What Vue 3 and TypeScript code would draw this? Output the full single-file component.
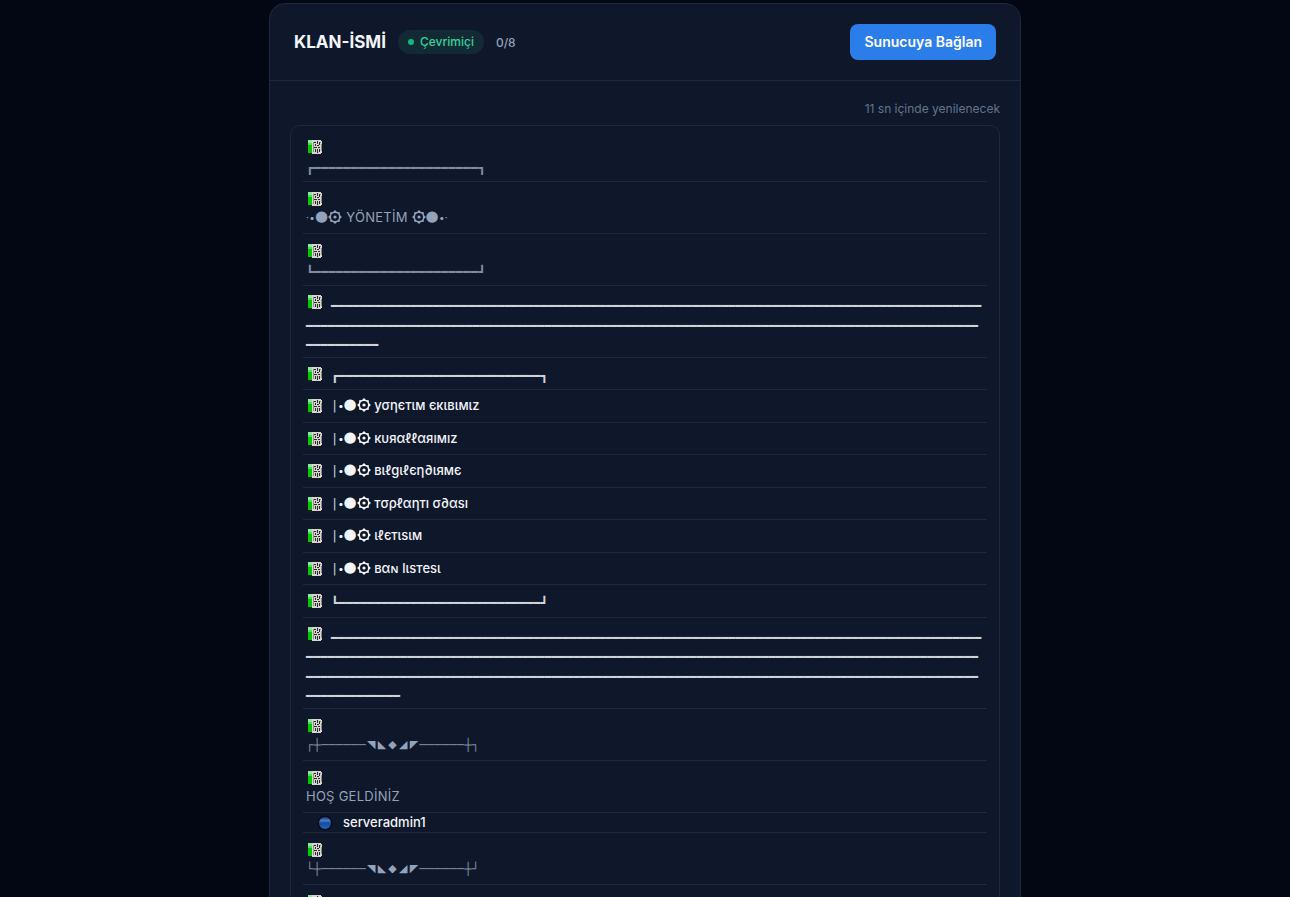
<script setup lang="ts">
type Kind = 'spacer' | 'channel' | 'user'
type PartType = 'text' | 'line' | 'frame' | 'rule' | 'disc' | 'star' | 'shape' | 'dots'

interface Part {
  type: PartType
  text: string
}

interface Row {
  kind: Kind
  parts: Part[]
}

const part = (type: PartType, value = ''): Part => ({ type, text: value })
const text = (value: string): Part => part('text', value)
const line = (value: string): Part => part('line', value)
const frame = (left: string, count: number, right: string): Part =>
  part('frame', left + '━'.repeat(count) + right)
const shapes = (value: string): Part[] => [...value].map((c) => part('shape', c))

const channel = (name: string): Row => ({
  kind: 'channel',
  parts: [line('|'), part('dots', '•'), part('disc', '●'), part('star'), text(' ' + name)],
})
const rule = (count: number): Row => ({ kind: 'channel', parts: [part('rule', '━'.repeat(count))] })
const dashes = '─'.repeat(6)

const rows: Row[] = [
  { kind: 'spacer', parts: [frame('┏', 22, '┓')] },
  {
    kind: 'spacer',
    parts: [
      part('dots', '·•'),
      part('disc', '●'),
      part('star'),
      text(' YÖNETİM '),
      part('star'),
      part('disc', '●'),
      part('dots', '•·'),
    ],
  },
  { kind: 'spacer', parts: [frame('┗', 22, '┛')] },
  rule(193),
  { kind: 'channel', parts: [frame('┏', 28, '┓')] },
  channel('yσηєтιм єкιвιмιz'),
  channel('кυяαℓℓαяıмız'),
  channel('вιℓgιℓєη∂ιямє'),
  channel('тσρℓαηтı σ∂αsı'),
  channel('ιℓєтιsιм'),
  channel('вαɴ lιsтesι'),
  { kind: 'channel', parts: [frame('┗', 28, '┛')] },
  rule(289),
  { kind: 'spacer', parts: [line('┌┼' + dashes), ...shapes('◥◣◆◢◤'), line(dashes + '┼┐')] },
  { kind: 'spacer', parts: [text('HOŞ GELDİNİZ')] },
  { kind: 'user', parts: [text('serveradmin1')] },
  { kind: 'spacer', parts: [line('└┼' + dashes), ...shapes('◥◣◆◢◤'), line(dashes + '┼┘')] },
  { kind: 'spacer', parts: [] },
]
</script>

<template>
  <main class="page">
    <section class="card">
      <header class="head">
        <h1 class="title">KLAN-İSMİ</h1>
        <span class="status"><i class="dot"></i>Çevrimiçi</span>
        <span class="count">0/8</span>
        <button type="button" class="connect">Sunucuya Bağlan</button>
      </header>
      <div class="body">
        <p class="refresh">11 sn içinde yenilenecek</p>
        <ul class="tree">
          <li v-for="(row, i) in rows" :key="i" class="row" :class="row.kind">
            <svg v-if="row.kind === 'user'" class="icon" viewBox="0 0 16 16" aria-hidden="true">
              <defs>
                <linearGradient id="orb" x1="0" y1="0" x2="0" y2="1">
                  <stop offset="0" stop-color="#123a7a" />
                  <stop offset="0.3" stop-color="#4a7fc4" />
                  <stop offset="0.5" stop-color="#174a9c" />
                  <stop offset="1" stop-color="#1f66c8" />
                </linearGradient>
              </defs>
              <circle cx="8" cy="8" r="7.5" fill="#070d19" />
              <circle cx="8" cy="8" r="6" fill="url(#orb)" />
            </svg>
            <svg v-else class="icon" viewBox="0 0 16 16" shape-rendering="crispEdges" aria-hidden="true">
              <path fill="#8ee8a0" d="M1 1h5v13H1z" />
              <path fill="#4cdc5c" d="M1 4h4v2H1z" />
              <path fill="#00c800" d="M1 6h4v8H1z" />
              <path fill="#d8d5ce" d="M5 1h9v1h1v12h-1v1H5z" />
              <path fill="#8b8a84" d="M6 3h1v10H6zM13 3h1v1h-1zM14 5h1v7h-1z" />
              <path fill="#24262a" d="M7 3h2v1H7zM10 2h1v3h-1zM12 3h1v3h-1zM8 5h1v2H8zM10 6h2v1h-2zM7 8h3v1H7zM11 8h2v1h-2zM8 10h1v3H8zM10 10h1v4h-1zM12 10h1v3h-1z" />
            </svg>
            <span class="name"><template v-for="(p, j) in row.parts" :key="j"><svg v-if="p.type === 'star'" class="star" viewBox="0 0 14 14" aria-hidden="true"><path d="M7 0.1 L9 2.1 L11.8 2.2 L11.9 5 L13.9 7 L11.9 9 L11.8 11.8 L9 11.9 L7 13.9 L5 11.9 L2.2 11.8 L2.1 9 L0.1 7 L2.1 5 L2.2 2.2 L5 2.1 Z" fill="currentColor" /><circle class="hole" cx="7" cy="7" r="4" /><circle cx="7" cy="7" r="1.6" fill="currentColor" /></svg><span v-else :class="p.type">{{ p.text }}</span></template></span>
          </li>
        </ul>
      </div>
    </section>
  </main>
</template>

<style>
html,
body {
  background: #030613;
  scrollbar-width: none;
}
body {
  margin: 0;
}
</style>

<style scoped>
.page {
  box-sizing: border-box;
  min-height: 100vh;
  padding: 3px 20px 0;
  background: #030613;
  font-family: Inter, "Noto Sans", "DejaVu Sans", sans-serif;
  color: #f1f5f9;
}
.card {
  box-sizing: border-box;
  max-width: 752px;
  margin: 0 auto;
  border: 1px solid #1e293b;
  border-radius: 16px;
  background: #0f172a;
}
.head {
  display: flex;
  align-items: center;
  gap: 12px;
  padding: 20px 24px;
  border-bottom: 1px solid #1e293b;
}
.title {
  margin: 0;
  font-size: 17px;
  font-weight: 700;
  line-height: 28px;
}
.status {
  display: flex;
  align-items: center;
  gap: 6px;
  padding: 3px 10px;
  border-radius: 12px;
  background: #132a35;
  color: #34d399;
  font-size: 12px;
  font-weight: 500;
  line-height: 18px;
}
.dot {
  width: 6px;
  height: 6px;
  border-radius: 50%;
  background: #10b981;
}
.count {
  color: #94a3b8;
  font-size: 12px;
  font-weight: 500;
}
.connect {
  margin-left: auto;
  padding: 8px 14px;
  border: 0;
  border-radius: 8px;
  background: #2b7de9;
  color: #fff;
  font: 600 14px/20px Inter, sans-serif;
}
.body {
  padding: 18px 20px 20px;
}
.refresh {
  margin: 0 0 6px;
  color: #64748b;
  font-size: 12px;
  line-height: 20px;
  text-align: right;
}
.tree {
  margin: 0;
  padding: 4px 12px;
  border: 1px solid #1e293b;
  border-radius: 10px;
  list-style: none;
  font-size: 13px;
  line-height: 1.5;
}
.row {
  padding: 6px 3px;
  border-bottom: 1px solid #1e293b;
  font-weight: 500;
  word-break: break-all;
}
.icon {
  width: 16px;
  height: 16px;
  margin: 0 8px 0 1px;
  vertical-align: -4px;
}
.spacer .icon {
  display: block;
  margin: 3px 1px 0;
}
.spacer .name {
  display: block;
  min-height: 20px;
  color: #94a3b8;
  font-weight: 400;
  line-height: 20px;
  letter-spacing: 0.02em;
}
.user {
  padding: 0 13px;
  line-height: 19px;
}
.user .icon {
  margin-right: 10px;
}
.name {
  white-space: pre-wrap;
}
.line,
.frame,
.rule {
  font-family: "DejaVu Sans Mono", monospace;
  font-size: 12px;
  font-weight: 400;
  line-height: 0;
  opacity: 0.85;
}
.frame {
  vertical-align: -2px;
}
.rule {
  vertical-align: -4px;
}
.disc {
  font-family: "DejaVu Sans", sans-serif;
  font-size: 15px;
  font-weight: 400;
  line-height: 0;
  vertical-align: 1px;
}
.shape {
  margin: 0 1px;
  font-family: "DejaVu Sans", sans-serif;
  font-size: 11px;
  line-height: 0;
  vertical-align: 1px;
}
.star {
  width: 14px;
  height: 14px;
  vertical-align: -2px;
}
.hole {
  fill: #0f172a;
}
.dots {
  font-size: 10px;
  line-height: 0;
  vertical-align: 1px;
}
</style>
